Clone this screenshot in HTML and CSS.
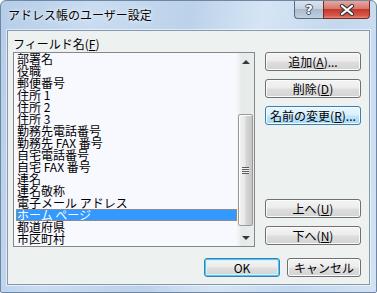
FILE: index.html
```html
<!DOCTYPE html>
<html lang="ja">
<head>
<meta charset="utf-8">
<title>アドレス帳のユーザー設定</title>
<link rel="stylesheet" href="styles.css">
</head>
<body>
<div class="window">
  <div class="titlebar">
    <span class="title">アドレス帳のユーザー設定</span>
    <div class="caption-buttons">
      <div class="cap help"><span>?</span></div>
      <div class="cap close">
        <svg width="16" height="12" viewBox="0 0 16 12">
          <path d="M3 2 L13 10 M13 2 L3 10" stroke="#3b3b3b" stroke-width="4.2" stroke-linecap="round"/>
          <path d="M3 2 L13 10 M13 2 L3 10" stroke="#ffffff" stroke-width="2.2" stroke-linecap="round"/>
        </svg>
      </div>
    </div>
  </div>
  <div class="client">
    <div class="main">
      <div class="field">
        <div class="label">フィールド名(<u>F</u>)</div>
        <div class="listbox">
          <ul class="items">
            <li>部署名</li>
            <li>役職</li>
            <li>郵便番号</li>
            <li>住所 1</li>
            <li>住所 2</li>
            <li>住所 3</li>
            <li>勤務先電話番号</li>
            <li>勤務先 FAX 番号</li>
            <li>自宅電話番号</li>
            <li>自宅 FAX 番号</li>
            <li>連名</li>
            <li>連名敬称</li>
            <li>電子メール アドレス</li>
            <li class="selected">ホーム ページ</li>
            <li>都道府県</li>
            <li>市区町村</li>
          </ul>
          <div class="scrollbar">
            <div class="arrow"><span class="tri up"></span></div>
            <div class="track-top"></div>
            <div class="thumb"><span class="grip"></span></div>
            <div class="track-bottom"></div>
            <div class="arrow"><span class="tri down"></span></div>
          </div>
        </div>
      </div>
      <div class="side">
        <div class="group">
          <button class="btn">追加(<u>A</u>)...</button>
          <button class="btn">削除(<u>D</u>)</button>
          <button class="btn hot">名前の変更(<u>R</u>)...</button>
        </div>
        <div class="group lower">
          <button class="btn">上へ(<u>U</u>)</button>
          <button class="btn">下へ(<u>N</u>)</button>
        </div>
      </div>
    </div>
    <div class="footer">
      <button class="btn default ok">OK</button>
      <button class="btn cancel">キャンセル</button>
    </div>
  </div>
</div>
</body>
</html>
```

FILE: styles.css
```css
* { box-sizing: border-box; }

html, body {
  margin: 0;
  padding: 0;
  background: #ffffff;
}

body {
  font-family: "Noto Sans CJK JP", "Noto Sans", sans-serif;
  font-size: 12px;
  color: #000;
}

.window {
  width: 377px;
  height: 293px;
  border: 1px solid #6f87a3;
  border-radius: 6px 6px 2px 2px;
  background:
    linear-gradient(100deg, #b4cde8 0%, #c9dcf1 22%, #bcd2ea 45%, #d6e5f4 62%, #c3d8ee 80%, #d2e2f3 100%);
  display: flex;
  flex-direction: column;
  overflow: hidden;
}

.titlebar {
  height: 29px;
  flex: none;
  display: flex;
  align-items: flex-start;
  justify-content: space-between;
  padding-left: 7px;
  padding-right: 6px;
}

.title {
  margin-top: 6px;
  font-size: 12px;
  line-height: 16px;
  color: #000;
  text-shadow: 0 0 6px rgba(255, 255, 255, 0.9), 0 0 2px rgba(255, 255, 255, 0.9);
}

.caption-buttons {
  display: flex;
  height: 18px;
}

.cap {
  height: 18px;
  display: flex;
  align-items: center;
  justify-content: center;
  border: 1px solid #596b82;
  border-top: none;
}

.help {
  width: 29px;
  border-right: none;
  border-radius: 0 0 0 4px;
  background: linear-gradient(#dbe4ee 0%, #c5d3e2 45%, #a9bccf 50%, #c0d0df 100%);
}

.help span {
  font-family: "DejaVu Sans", sans-serif;
  font-weight: bold;
  font-size: 13px;
  line-height: 13px;
  color: #ffffff;
  text-shadow: -1px 0 #3d4d5f, 1px 0 #3d4d5f, 0 -1px #3d4d5f, 0 1px #3d4d5f;
}

.close {
  width: 47px;
  border-radius: 0 0 4px 0;
  border-color: #7a2a22;
  background: linear-gradient(#e6a89f 0%, #d8776c 45%, #c4392a 50%, #d4584a 85%, #e58a78 100%);
}

.client {
  flex: 1;
  margin: 0 6px 7px 6px;
  border: 1px solid #8598ae;
  box-shadow: 0 0 0 1px rgba(255, 255, 255, 0.55);
  background: #edf1f0;
  padding: 6px 8px 7px 5px;
  display: flex;
  flex-direction: column;
}

.main {
  display: flex;
  gap: 10px;
}

.field {
  width: 242px;
  display: flex;
  flex-direction: column;
}

.label {
  height: 15px;
  line-height: 14px;
  padding-left: 0;
}

.listbox {
  height: 195px;
  border: 1px solid #828790;
  background: #f8f8ff;
  display: flex;
  padding-left: 2px;
}

.items {
  list-style: none;
  margin: 0;
  padding: 0;
  width: 221px;
  overflow: hidden;
}

.items li {
  height: 12px;
  line-height: 12px;
  padding-left: 1px;
  white-space: nowrap;
  font-size: 12px;
}

.items li.selected {
  background: #3399ff;
  color: #ffffff;
  outline: 1px dotted #d9822b;
  outline-offset: -1px;
}

.scrollbar {
  width: 17px;
  display: flex;
  flex-direction: column;
  background: linear-gradient(90deg, #f4f6f6 0%, #e6ebea 20%, #e9edec 100%);
  border-left: 1px solid #f2f4f4;
}

.arrow {
  height: 17px;
  flex: none;
  display: flex;
  align-items: center;
  justify-content: center;
}

.tri {
  width: 0;
  height: 0;
  border-left: 4px solid transparent;
  border-right: 4px solid transparent;
}

.tri.up {
  border-bottom: 4px solid #333a40;
}

.tri.down {
  border-top: 4px solid #333a40;
}

.track-top {
  height: 44px;
  flex: none;
}

.thumb {
  height: 112px;
  flex: none;
  margin: 0 1px 0 0;
  border: 1px solid #9a9a9a;
  border-radius: 2px;
  background: linear-gradient(90deg, #f3f3f3 0%, #e8e8e8 45%, #d5d5d5 55%, #c6c6c6 100%);
  box-shadow: inset 1px 1px 0 #fbfbfb;
  display: flex;
  align-items: center;
  justify-content: center;
}

.grip {
  width: 7px;
  height: 7px;
  background: repeating-linear-gradient(#5b5b5b 0, #5b5b5b 1px, #f3f3f3 1px, #f3f3f3 2px);
}

.track-bottom {
  flex: 1;
}

.side {
  width: 96px;
  padding-top: 15px;
  display: flex;
  flex-direction: column;
}

.group {
  display: flex;
  flex-direction: column;
  gap: 8px;
}

.group.lower {
  margin-top: 74px;
}

.btn {
  font-family: "Noto Sans CJK JP", "Noto Sans", sans-serif;
  font-size: 12px;
  line-height: 15px;
  color: #000;
  height: 19px;
  width: 96px;
  padding: 0;
  border: 1px solid #707070;
  border-radius: 3px;
  background: linear-gradient(#f4f4f4 0%, #ececec 48%, #dedede 52%, #d3d3d3 100%);
  box-shadow: inset 0 0 0 1px #fbfbfb;
  text-align: center;
  display: flex;
  align-items: center;
  justify-content: center;
}

.btn u {
  text-decoration: underline;
  text-underline-offset: 1px;
}

.btn.hot {
  border-color: #3c7fb1;
  background: linear-gradient(#eaf6fd 0%, #d9f0fc 48%, #bee6fd 52%, #a7d9f5 100%);
  box-shadow: inset 0 0 0 1px #f4fbff;
}

.footer {
  margin-top: 11px;
  display: flex;
  justify-content: flex-end;
  gap: 7px;
}

.btn.ok {
  width: 76px;
}

.btn.cancel {
  width: 74px;
}

.btn.default {
  border-color: #3c7fb1;
  box-shadow: inset 0 0 0 1px #4fc8f5, inset 0 0 0 2px #d6f1fc;
}
```
